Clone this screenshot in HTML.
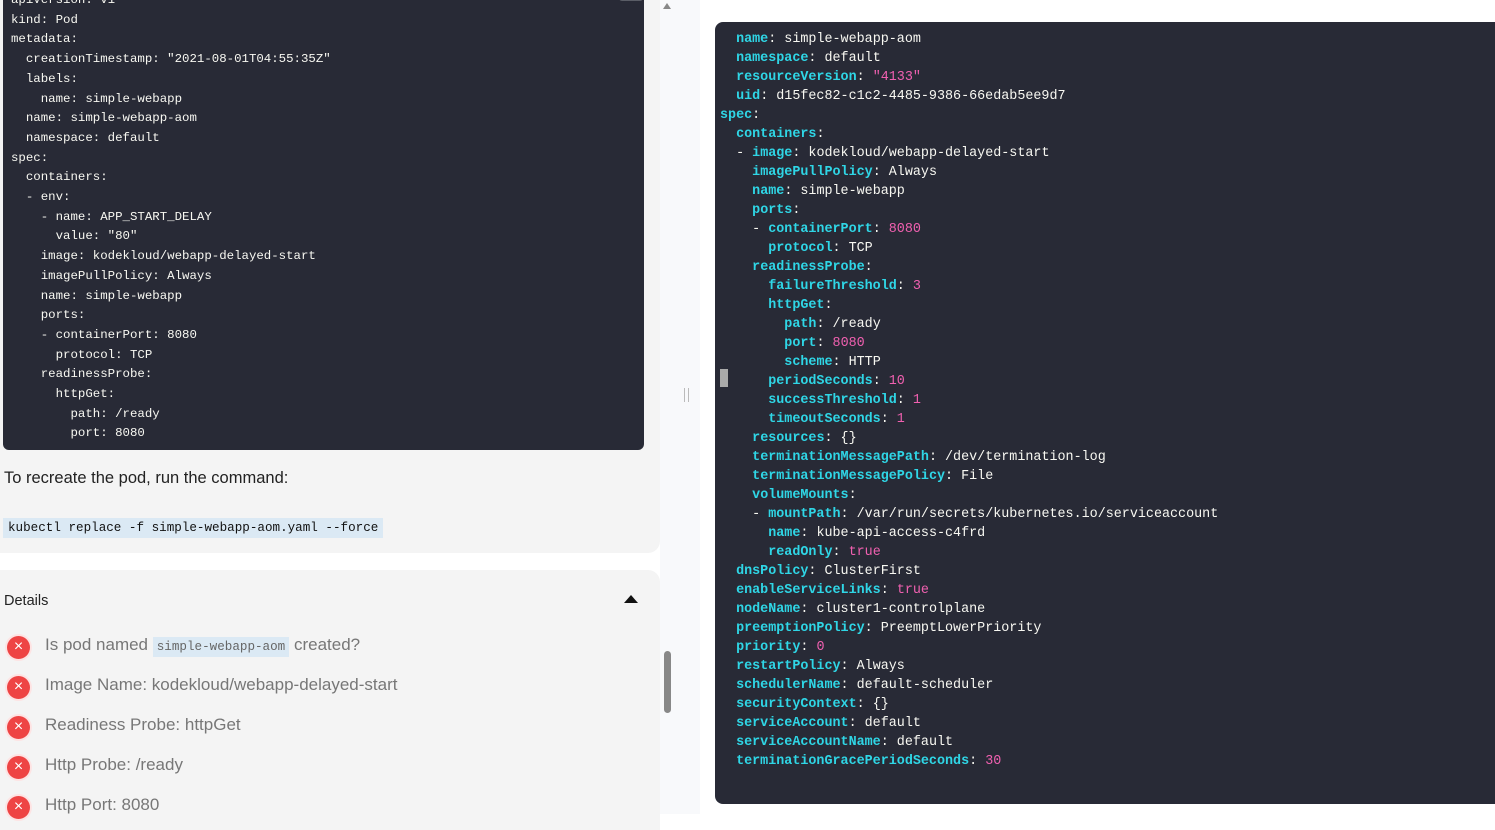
<!DOCTYPE html>
<html><head><meta charset="utf-8"><style>
*{margin:0;padding:0;box-sizing:border-box}
body{width:1495px;height:814px;overflow:hidden;background:#fff;position:relative;font-family:"Liberation Sans",sans-serif}
.lp{position:absolute;left:0;top:0;width:660px;height:553px;background:#f4f4f4;border-radius:0 0 12px 0}
.code1{position:absolute;left:3px;top:-10px;width:641px;height:460px;background:#282a36;border-radius:0 0 6px 6px}
.code1 pre{position:absolute;left:8px;top:1px;font:12.4px/19.7px "Liberation Mono",monospace;color:#f8f8f2}
.copy{position:absolute;left:616px;top:0;width:24px;height:11px;background:#5a5d66;border-radius:0 0 3px 3px}
.t1{position:absolute;left:4px;top:469px;font-size:16.5px;color:#222}
.cmd{position:absolute;left:3px;top:518px;background:#dbe9f4;padding:1px 5px;font:12.6px/18px "Liberation Mono",monospace;color:#111}
.dp{position:absolute;left:0;top:570px;width:660px;height:260px;background:#f4f4f4;border-radius:0 12px 0 0}
.dt{position:absolute;left:4px;top:593px;font-size:14.5px;color:#222}
.tri{position:absolute;left:624px;top:595px;width:0;height:0;border-left:7px solid transparent;border-right:7px solid transparent;border-bottom:8px solid #111}
.it{position:absolute;left:45px;font-size:17px;color:#777}
.ic{position:absolute;left:5px;width:27px;height:27px;border-radius:50%;background:#fde3e3}
.ic::after{content:"×";position:absolute;left:2px;top:2px;width:23px;height:23px;border-radius:50%;background:#ee4444;color:#fff;font-size:16px;line-height:22px;text-align:center}
.tag{background:#dbe9f4;font:12.6px "Liberation Mono",monospace;padding:3px 4px;color:#666}
.sb{position:absolute;left:660px;top:0;width:40px;height:814px;background:#f8f9fb}
.thumb{position:absolute;left:664px;top:651px;width:7px;height:62px;background:#888;border-radius:4px}
.code2{position:absolute;left:715px;top:22px;width:790px;height:782px;background:#282a36;border-radius:8px 0 0 8px}
.code2 pre{position:absolute;left:5px;top:8px;font:13.4px/19px "Liberation Mono",monospace;color:#f8f8f2}
.k{color:#2fd6e6;font-weight:bold}.n{color:#f060b0}
.cur{position:absolute;left:720px;top:369px;width:8px;height:18px;background:#aaa}
</style></head><body>
<div class="lp">
<div class="code1"><div class="copy"></div><pre>apiVersion: v1
kind: Pod
metadata:
  creationTimestamp: "2021-08-01T04:55:35Z"
  labels:
    name: simple-webapp
  name: simple-webapp-aom
  namespace: default
spec:
  containers:
  - env:
    - name: APP_START_DELAY
      value: "80"
    image: kodekloud/webapp-delayed-start
    imagePullPolicy: Always
    name: simple-webapp
    ports:
    - containerPort: 8080
      protocol: TCP
    readinessProbe:
      httpGet:
        path: /ready
        port: 8080</pre></div>
<div class="t1">To recreate the pod, run the command:</div>
<div class="cmd">kubectl replace -f simple-webapp-aom.yaml --force</div>
</div>
<div class="dp"></div>
<div class="dt">Details</div><div class="tri"></div>
<div class="ic" style="top:634px"></div><div class="it" style="top:635px">Is pod named <span class="tag">simple-webapp-aom</span> created?</div>
<div class="ic" style="top:674px"></div><div class="it" style="top:675px">Image Name: kodekloud/webapp-delayed-start</div>
<div class="ic" style="top:714px"></div><div class="it" style="top:715px">Readiness Probe: httpGet</div>
<div class="ic" style="top:754px"></div><div class="it" style="top:755px">Http Probe: /ready</div>
<div class="ic" style="top:794px"></div><div class="it" style="top:795px">Http Port: 8080</div>
<div class="sb"></div>
<div style="position:absolute;left:663px;top:3px;border-left:4px solid transparent;border-right:4px solid transparent;border-bottom:6px solid #888"></div>
<div class="thumb"></div>
<div style="position:absolute;left:684px;top:388px;width:1px;height:14px;background:#bbb"></div>
<div style="position:absolute;left:688px;top:388px;width:1px;height:14px;background:#bbb"></div>
<div class="code2"><pre>  <span class="k">name</span>: simple-webapp-aom
  <span class="k">namespace</span>: default
  <span class="k">resourceVersion</span>: <span class="n">"4133"</span>
  <span class="k">uid</span>: d15fec82-c1c2-4485-9386-66edab5ee9d7
<span class="k">spec</span>:
  <span class="k">containers</span>:
  - <span class="k">image</span>: kodekloud/webapp-delayed-start
    <span class="k">imagePullPolicy</span>: Always
    <span class="k">name</span>: simple-webapp
    <span class="k">ports</span>:
    - <span class="k">containerPort</span>: <span class="n">8080</span>
      <span class="k">protocol</span>: TCP
    <span class="k">readinessProbe</span>:
      <span class="k">failureThreshold</span>: <span class="n">3</span>
      <span class="k">httpGet</span>:
        <span class="k">path</span>: /ready
        <span class="k">port</span>: <span class="n">8080</span>
        <span class="k">scheme</span>: HTTP
      <span class="k">periodSeconds</span>: <span class="n">10</span>
      <span class="k">successThreshold</span>: <span class="n">1</span>
      <span class="k">timeoutSeconds</span>: <span class="n">1</span>
    <span class="k">resources</span>: {}
    <span class="k">terminationMessagePath</span>: /dev/termination-log
    <span class="k">terminationMessagePolicy</span>: File
    <span class="k">volumeMounts</span>:
    - <span class="k">mountPath</span>: /var/run/secrets/kubernetes.io/serviceaccount
      <span class="k">name</span>: kube-api-access-c4frd
      <span class="k">readOnly</span>: <span class="n">true</span>
  <span class="k">dnsPolicy</span>: ClusterFirst
  <span class="k">enableServiceLinks</span>: <span class="n">true</span>
  <span class="k">nodeName</span>: cluster1-controlplane
  <span class="k">preemptionPolicy</span>: PreemptLowerPriority
  <span class="k">priority</span>: <span class="n">0</span>
  <span class="k">restartPolicy</span>: Always
  <span class="k">schedulerName</span>: default-scheduler
  <span class="k">securityContext</span>: {}
  <span class="k">serviceAccount</span>: default
  <span class="k">serviceAccountName</span>: default
  <span class="k">terminationGracePeriodSeconds</span>: <span class="n">30</span></pre></div>
<div class="cur"></div>
</body></html>
